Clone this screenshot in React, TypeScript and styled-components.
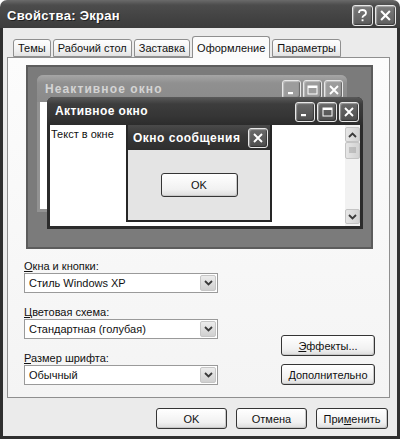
import React from "react";
import styled, { createGlobalStyle } from "styled-components";

const Global = createGlobalStyle`
  html, body { margin: 0; padding: 0; background: #fff; }
  body { font-family: "Liberation Sans", Arial, sans-serif; font-size: 11px; color: #111; }
`;

const Frame = styled.div`
  width: 400px;
  height: 439px;
  display: flex;
  flex-direction: column;
  box-sizing: border-box;
`;

const TitleBar = styled.div`
  height: 28px;
  flex: none;
  display: flex;
  align-items: center;
  padding: 0 4px 0 7px;
  border-radius: 7px 7px 0 0;
  background: linear-gradient(#6a6a6a, #4c4c4c 18%, #434343 60%, #3c3c3c);
`;

const TitleText = styled.div`
  flex: 1;
  color: #fff;
  font-weight: bold;
  font-size: 13px;
  letter-spacing: 0.3px;
  text-shadow: 1px 1px 0 #222;
  padding-top: 2px;
`;

const CapButtons = styled.div`
  display: flex;
  gap: 2px;
  padding-top: 2px;
`;

const CapButton = styled.div<{ $size: number; $tone: string }>`
  width: ${(p) => p.$size}px;
  height: ${(p) => p.$size}px;
  box-sizing: border-box;
  border: 1px solid #e8e8e8;
  border-radius: 3px;
  background: ${(p) => p.$tone};
  display: flex;
  align-items: center;
  justify-content: center;
  box-shadow: inset -1px -1px 1px rgba(0, 0, 0, 0.35), inset 1px 1px 1px rgba(255, 255, 255, 0.35);
`;

const Body = styled.div`
  flex: 1;
  display: flex;
  flex-direction: column;
  background: #ebebeb;
  border: 3px solid #2f2f2f;
  border-top: none;
  padding: 8px 7px 0 4px;
`;

const TabStrip = styled.div`
  display: flex;
  align-items: flex-end;
  height: 21px;
  padding-left: 6px;
  gap: 2px;
  position: relative;
  z-index: 1;
`;

const Tab = styled.div<{ $active?: boolean }>`
  height: ${(p) => (p.$active ? 22 : 18)}px;
  margin-bottom: ${(p) => (p.$active ? -1 : 0)}px;
  box-sizing: border-box;
  padding: 0 4px;
  display: flex;
  align-items: center;
  border: 1px solid #8f8f8f;
  border-bottom: ${(p) => (p.$active ? "none" : "1px solid #8f8f8f")};
  border-radius: 3px 3px 0 0;
  background: ${(p) =>
    p.$active ? "#fbfbfb" : "linear-gradient(#fefefe, #f2f2f2 60%, #e2e2e2)"};
  font-size: 11px;
  white-space: nowrap;
`;

const Panel = styled.div`
  flex: 1;
  display: flex;
  flex-direction: column;
  border: 1px solid #8f8f8f;
  background: linear-gradient(#fcfcfc, #f4f4f4);
  padding: 7px 14px 0 18px;
`;

const Preview = styled.div`
  width: 347px;
  height: 184px;
  box-sizing: border-box;
  border: 2px solid #5c5c5c;
  background: #7b7b7b;
  position: relative;
  overflow: hidden;
`;

const MiniWindow = styled.div<{ $active?: boolean }>`
  position: absolute;
  display: flex;
  flex-direction: column;
  box-sizing: border-box;
  border: 3px solid ${(p) => (p.$active ? "#2b2b2b" : "#929292")};
  border-top: none;
  border-radius: 6px 6px 0 0;
  background: ${(p) => (p.$active ? "#2b2b2b" : "#929292")};
`;

const MiniTitle = styled.div<{ $active?: boolean; $h: number }>`
  height: ${(p) => p.$h}px;
  flex: none;
  display: flex;
  align-items: center;
  border-radius: 6px 6px 0 0;
  margin: 0 -3px;
  padding-left: 8px;
  padding-right: 4px;
  background: ${(p) =>
    p.$active
      ? "linear-gradient(#5a5a5a, #3d3d3d 25%, #353535 70%, #2c2c2c)"
      : "linear-gradient(#a6a6a6, #909090 30%, #8a8a8a)"};
  color: ${(p) => (p.$active ? "#fff" : "#d4d4d4")};
  font-weight: bold;
  font-size: 12px;
  letter-spacing: ${(p) => (p.$active ? 0.4 : 1.1)}px;
`;

const MiniTitleText = styled.div`
  flex: 1;
  white-space: nowrap;
`;

const MiniBody = styled.div`
  flex: 1;
  display: flex;
  background: #fff;
  position: relative;
`;

const WindowText = styled.div`
  flex: 1;
  padding: 3px 1px;
  font-size: 11px;
`;

const ScrollBar = styled.div`
  width: 15px;
  display: flex;
  flex-direction: column;
  background: #f2f2f2;
  padding: 2px 0;
`;

const ScrollBtn = styled.div<{ $h: number; $push?: boolean }>`
  height: ${(p) => p.$h}px;
  margin-top: ${(p) => (p.$push ? "auto" : "0")};
  box-sizing: border-box;
  border: 1px solid #c4c4c4;
  border-radius: 2px;
  background: linear-gradient(90deg, #e6e6e6, #d2d2d2);
  display: flex;
  align-items: center;
  justify-content: center;
`;

const MessageBox = styled.div`
  position: absolute;
  left: 76px;
  top: 0;
  width: 146px;
  height: 97px;
  box-sizing: border-box;
  border: 2px solid #262626;
  border-top: none;
  display: flex;
  flex-direction: column;
  background: #e4e4e4;
`;

const MessageTitle = styled.div`
  height: 25px;
  display: flex;
  align-items: center;
  padding: 0 2px 0 5px;
  background: linear-gradient(#4a4a4a, #383838 40%, #2e2e2e);
  color: #fff;
  font-weight: bold;
  font-size: 12px;
  letter-spacing: 0.5px;
`;

const MessageBody = styled.div`
  flex: 1;
  display: flex;
  justify-content: center;
  padding-top: 23px;
`;

const PushButton = styled.div<{ $w: number; $h?: number }>`
  width: ${(p) => p.$w}px;
  height: ${(p) => p.$h ?? 21}px;
  box-sizing: border-box;
  border: 1px solid #353535;
  border-radius: 3px;
  background: linear-gradient(#ffffff, #f1f1f1 70%, #dcdcdc);
  box-shadow: inset -1px -1px 0 #c8c8c8;
  display: flex;
  align-items: center;
  justify-content: center;
  font-size: 11px;
  white-space: nowrap;
`;

const Lower = styled.div`
  margin-top: 10px;
  display: flex;
  justify-content: space-between;
  align-items: flex-end;
`;

const Fields = styled.div`
  display: flex;
  flex-direction: column;
  gap: 12px;
  margin-left: -2px;
`;

const Field = styled.div`
  display: flex;
  flex-direction: column;
`;

const Label = styled.div`
  line-height: 14px;
  font-size: 11px;
`;

const Combo = styled.div`
  width: 194px;
  height: 20px;
  box-sizing: border-box;
  border: 1px solid #9a9a9a;
  background: #fff;
  display: flex;
  align-items: center;
  padding: 0 1px 0 4px;
`;

const ComboText = styled.div`
  flex: 1;
  font-size: 11px;
`;

const ComboArrow = styled.div`
  width: 16px;
  height: 16px;
  box-sizing: border-box;
  border: 1px solid #c6c6c6;
  border-radius: 2px;
  background: linear-gradient(#ececec, #d0d0d0);
  display: flex;
  align-items: center;
  justify-content: center;
`;

const SideButtons = styled.div`
  display: flex;
  flex-direction: column;
  gap: 8px;
`;

const ButtonRow = styled.div`
  display: flex;
  justify-content: flex-end;
  gap: 9px;
  padding: 10px 2px 7px 0;
`;

const U = styled.span`
  text-decoration: underline;
`;

const Chevron = ({ up }: { up?: boolean }) => (
  <svg width="9" height="6" viewBox="0 0 9 6">
    <polyline
      points={up ? "1,5 4.5,1.5 8,5" : "1,1 4.5,4.5 8,1"}
      fill="none"
      stroke="#3a3a3a"
      strokeWidth="1.8"
    />
  </svg>
);

const CloseGlyph = ({ s = 10 }: { s?: number }) => (
  <svg width={s} height={s} viewBox="0 0 10 10">
    <path d="M1 1 L9 9 M9 1 L1 9" stroke="#fff" strokeWidth="1.9" />
  </svg>
);

const MinGlyph = () => (
  <svg width="10" height="10" viewBox="0 0 10 10">
    <rect x="1" y="7" width="5" height="2.2" fill="#fff" />
  </svg>
);

const MaxGlyph = () => (
  <svg width="11" height="10" viewBox="0 0 11 10">
    <rect x="1" y="1" width="9" height="8" fill="none" stroke="#fff" strokeWidth="1" />
    <rect x="1" y="1" width="9" height="2" fill="#fff" />
  </svg>
);

const HelpGlyph = () => (
  <svg width="11" height="13" viewBox="0 0 11 13">
    <path
      d="M2 4 C2 1.6 3.6 1 5.5 1 C7.6 1 9 2.2 9 3.9 C9 5.6 7.6 6.2 6.6 6.8 C5.8 7.3 5.5 7.8 5.5 8.8"
      fill="none"
      stroke="#fff"
      strokeWidth="1.8"
    />
    <rect x="4.6" y="10.3" width="1.9" height="1.9" fill="#fff" />
  </svg>
);

const Grip = () => (
  <svg width="7" height="7" viewBox="0 0 7 7">
    <path d="M0 1 H7 M0 3 H7 M0 5 H7" stroke="#9a9a9a" strokeWidth="0.9" />
  </svg>
);

const fields = [
  { key: "О", rest: "кна и кнопки:", value: "Стиль Windows XP" },
  { key: "Ц", rest: "ветовая схема:", value: "Стандартная (голубая)" },
  { key: "Р", rest: "азмер шрифта:", value: "Обычный" },
];

const tabs = ["Темы", "Рабочий стол", "Заставка", "Оформление", "Параметры"];

const activeTone = "linear-gradient(#6a6a6a, #4e4e4e)";

export default function App() {
  return (
    <>
      <Global />
      <Frame>
        <TitleBar>
          <TitleText>Свойства: Экран</TitleText>
          <CapButtons>
            <CapButton $size={21} $tone="linear-gradient(#7a7a7a, #5c5c5c)">
              <HelpGlyph />
            </CapButton>
            <CapButton $size={21} $tone="linear-gradient(#7c7c7c, #5e5e5e)">
              <CloseGlyph s={11} />
            </CapButton>
          </CapButtons>
        </TitleBar>
        <Body>
          <TabStrip>
            {tabs.map((t) => (
              <Tab key={t} $active={t === "Оформление"}>
                {t}
              </Tab>
            ))}
          </TabStrip>
          <Panel>
            <Preview>
              <MiniWindow style={{ left: 9, top: 8, width: 310, height: 137 }}>
                <MiniTitle $h={27}>
                  <MiniTitleText>Неактивное окно</MiniTitleText>
                  <CapButtons>
                    <CapButton $size={19} $tone="#9c9c9c">
                      <MinGlyph />
                    </CapButton>
                    <CapButton $size={19} $tone="#9c9c9c">
                      <MaxGlyph />
                    </CapButton>
                    <CapButton $size={19} $tone="#9c9c9c">
                      <CloseGlyph />
                    </CapButton>
                  </CapButtons>
                </MiniTitle>
                <MiniBody />
              </MiniWindow>
              <MiniWindow $active style={{ left: 19, top: 30, width: 316, height: 132 }}>
                <MiniTitle $active $h={28}>
                  <MiniTitleText>Активное окно</MiniTitleText>
                  <CapButtons>
                    <CapButton $size={20} $tone={activeTone}>
                      <MinGlyph />
                    </CapButton>
                    <CapButton $size={20} $tone={activeTone}>
                      <MaxGlyph />
                    </CapButton>
                    <CapButton $size={20} $tone={activeTone}>
                      <CloseGlyph />
                    </CapButton>
                  </CapButtons>
                </MiniTitle>
                <MiniBody>
                  <WindowText>Текст в окне</WindowText>
                  <ScrollBar>
                    <ScrollBtn $h={15}>
                      <Chevron up />
                    </ScrollBtn>
                    <ScrollBtn $h={17}>
                      <Grip />
                    </ScrollBtn>
                    <ScrollBtn $h={15} $push>
                      <Chevron />
                    </ScrollBtn>
                  </ScrollBar>
                  <MessageBox>
                    <MessageTitle>
                      <MiniTitleText>Окно сообщения</MiniTitleText>
                      <CapButton $size={20} $tone={activeTone}>
                        <CloseGlyph />
                      </CapButton>
                    </MessageTitle>
                    <MessageBody>
                      <PushButton $w={77} $h={24}>
                        OK
                      </PushButton>
                    </MessageBody>
                  </MessageBox>
                </MiniBody>
              </MiniWindow>
            </Preview>
            <Lower>
              <Fields>
                {fields.map((f) => (
                  <Field key={f.value}>
                    <Label>
                      <U>{f.key}</U>
                      {f.rest}
                    </Label>
                    <Combo>
                      <ComboText>{f.value}</ComboText>
                      <ComboArrow>
                        <Chevron />
                      </ComboArrow>
                    </Combo>
                  </Field>
                ))}
              </Fields>
              <SideButtons>
                <PushButton $w={94}>
                  <U>Э</U>ффекты...
                </PushButton>
                <PushButton $w={94}>
                  <U>Д</U>ополнительно
                </PushButton>
              </SideButtons>
            </Lower>
          </Panel>
          <ButtonRow>
            <PushButton $w={71}>OK</PushButton>
            <PushButton $w={71}>Отмена</PushButton>
            <PushButton $w={72}>
              При<U>м</U>енить
            </PushButton>
          </ButtonRow>
        </Body>
      </Frame>
    </>
  );
}
